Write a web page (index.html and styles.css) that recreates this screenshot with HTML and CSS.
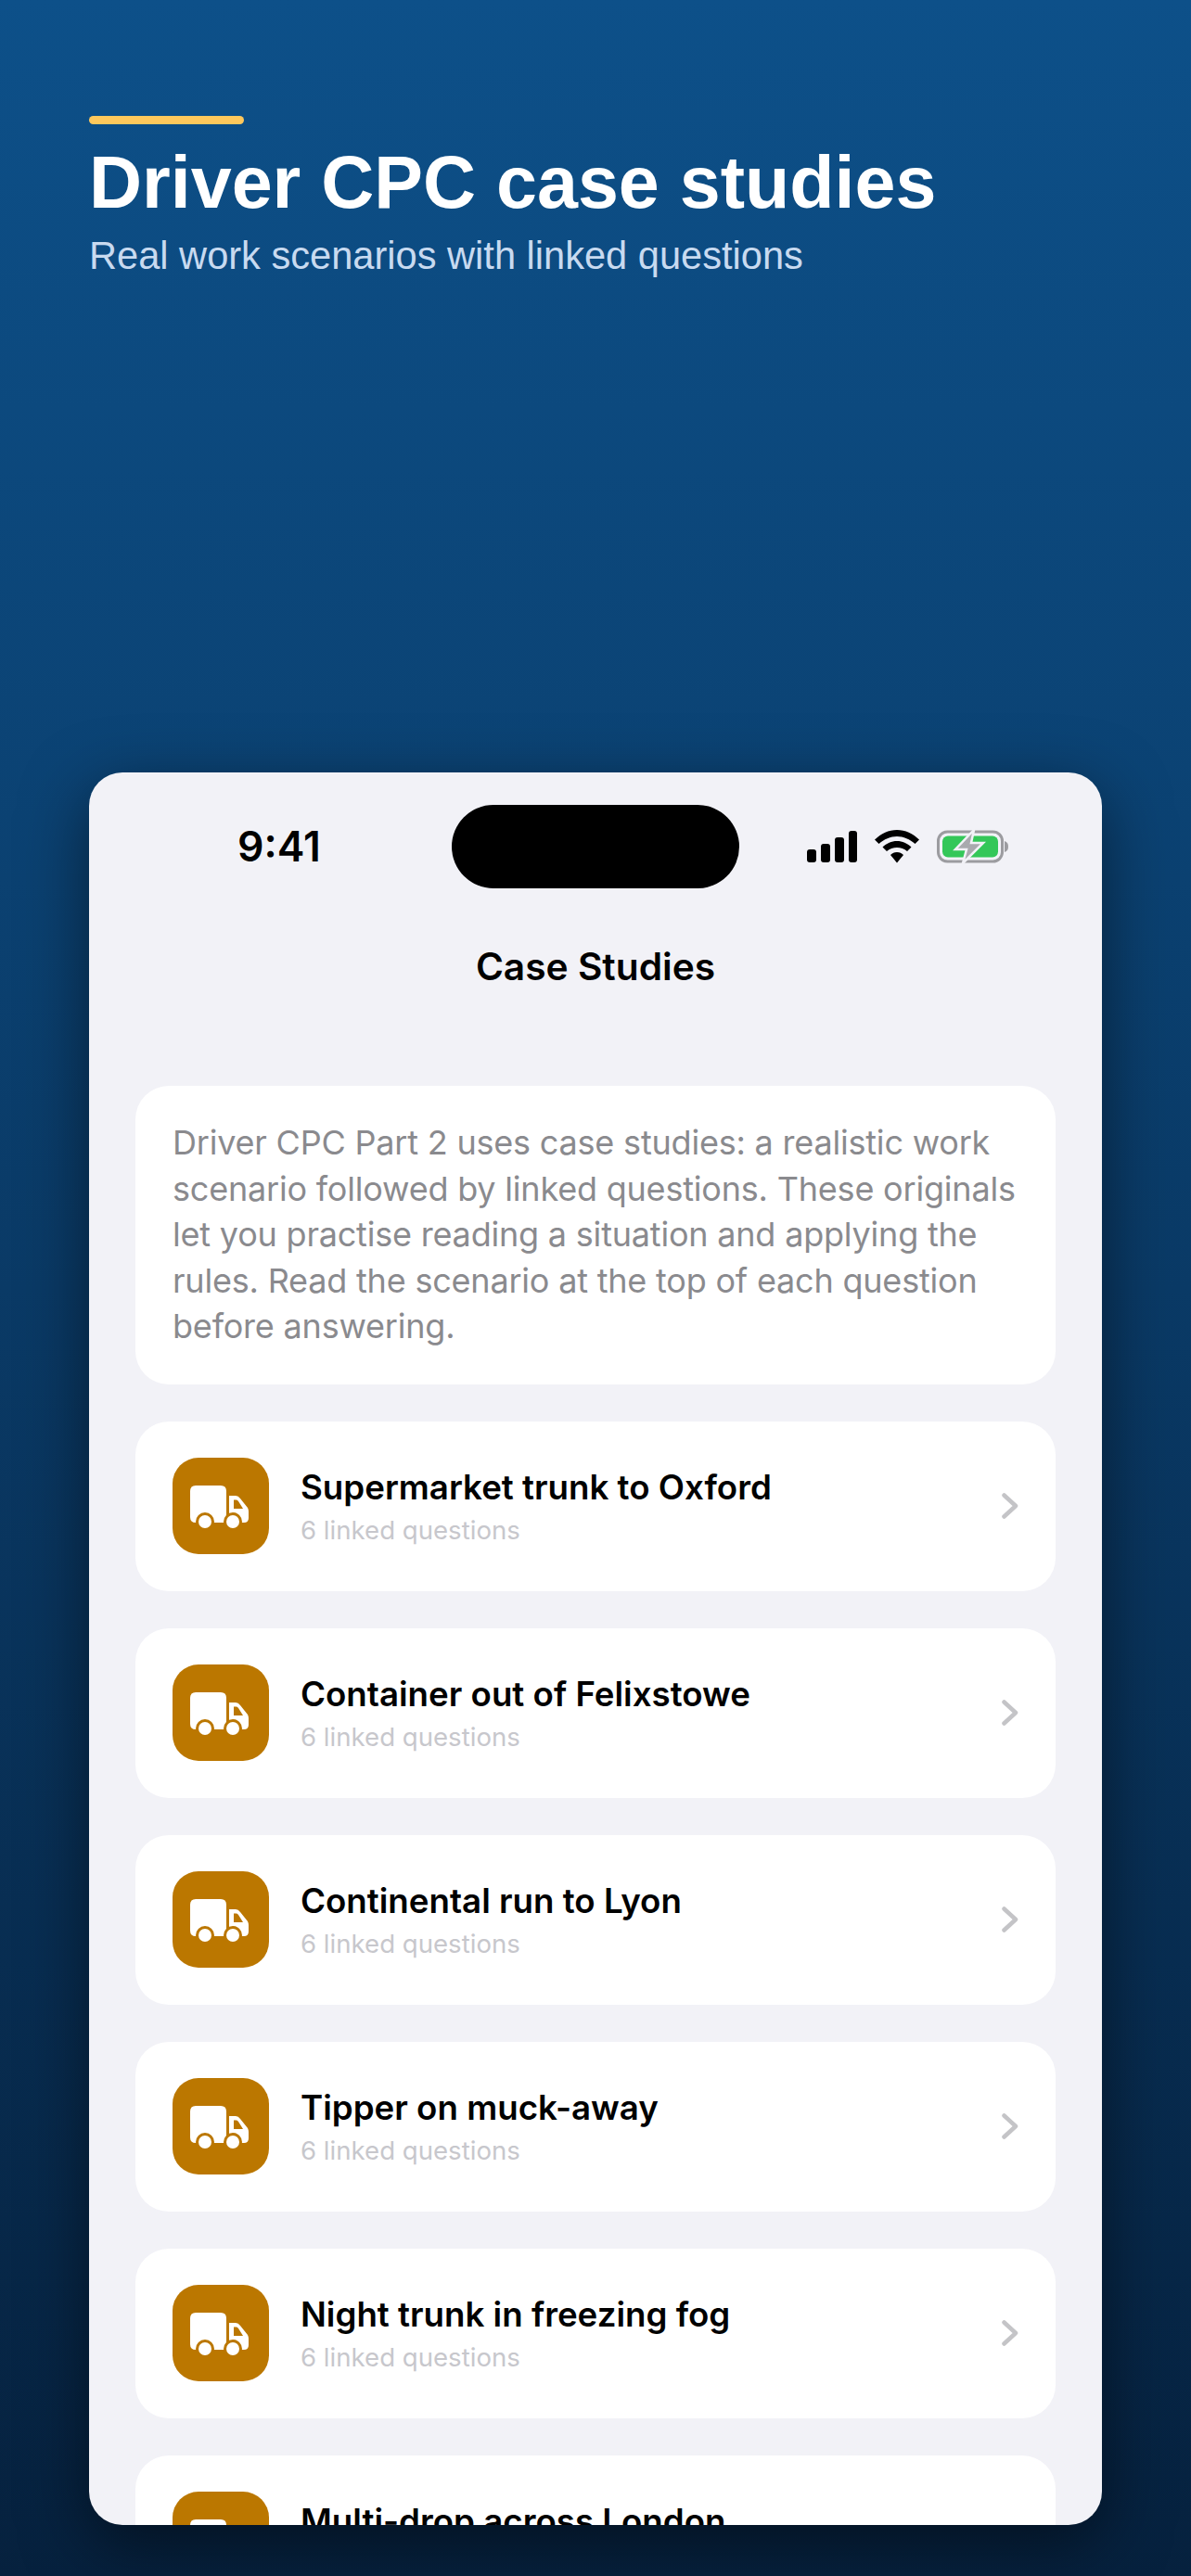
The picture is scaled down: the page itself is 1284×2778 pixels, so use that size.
FILE: index.html
```html
<!DOCTYPE html>
<html>
<head>
<meta charset="UTF-8">
<title>Driver CPC case studies</title>
<link rel="stylesheet" href="styles.css">
</head>
<body>
<div class="hero">
	<div class="accent"></div>
	<h1>Driver CPC case studies</h1>
	<p>Real work scenarios with linked questions</p>
</div>
<div class="phone">
	<div class="status">
		<span class="time">9:41</span>
		<div class="island"></div>
		<div class="status-icons">
			<svg width="54" height="34" viewBox="0 0 54 34"><rect x="0" y="20" width="10" height="14" rx="3"/><rect x="15" y="14" width="10" height="20" rx="3"/><rect x="30" y="7" width="10" height="27" rx="3"/><rect x="45" y="0" width="9" height="34" rx="3"/></svg>
			<svg width="48" height="36" viewBox="0 0 48 36"><path d="M24 0C15 0 7 4 0 10.500L4.500 15C10 10 17 7 24 7S38 10 43.500 15L48 10.500C41 4 33 0 24 0Z"/><path d="M24 12C18 12 13 14.500 8.500 18.500L13 23C16 20.500 20 19 24 19S32 20.500 35 23L39.500 18.500C35 14.500 30 12 24 12Z"/><path d="M24 24C21 24 19 25 17 27L24 35.500L31 27C29 25 27 24 24 24Z"/></svg>
			<svg width="78" height="36" viewBox="0 0 78 36"><rect x="1.500" y="2" width="69" height="32" rx="10" fill="none" stroke="#9c9ca0" stroke-width="3"/><rect x="6" y="6.500" width="60" height="23" rx="6" fill="#34c759"/><path d="M73 12C76 13 77 15 77 18S76 23 73 24Z" fill="#9c9ca0"/><path d="M40 0L20 21H32L28 36L50 14H37Z" fill="#a9a9ae" stroke="#f2f2f7" stroke-width="2.500"/></svg>
		</div>
	</div>
	<div class="nav-title">Case Studies</div>
	<div class="content">
		<div class="info">Driver CPC Part 2 uses case studies: a realistic work scenario followed by linked questions. These originals let you practise reading a situation and applying the rules. Read the scenario at the top of each question before answering.</div>

		<div class="row">
			<div class="row-icon"><svg width="104" height="104" viewBox="0 0 104 104"><use href="#truck"/></svg></div>
			<div class="row-text"><h3>Supermarket trunk to Oxford</h3><span>6 linked questions</span></div>
			<svg class="chevron" width="18" height="28" viewBox="0 0 18 28"><path d="M2.500 2.500L15 14L2.500 25.500" fill="none" stroke="#c4c4c7" stroke-width="4.500" stroke-linecap="round" stroke-linejoin="round"/></svg>
		</div>
		<div class="row">
			<div class="row-icon"><svg width="104" height="104" viewBox="0 0 104 104"><use href="#truck"/></svg></div>
			<div class="row-text"><h3>Container out of Felixstowe</h3><span>6 linked questions</span></div>
			<svg class="chevron" width="18" height="28" viewBox="0 0 18 28"><path d="M2.500 2.500L15 14L2.500 25.500" fill="none" stroke="#c4c4c7" stroke-width="4.500" stroke-linecap="round" stroke-linejoin="round"/></svg>
		</div>
		<div class="row">
			<div class="row-icon"><svg width="104" height="104" viewBox="0 0 104 104"><use href="#truck"/></svg></div>
			<div class="row-text"><h3>Continental run to Lyon</h3><span>6 linked questions</span></div>
			<svg class="chevron" width="18" height="28" viewBox="0 0 18 28"><path d="M2.500 2.500L15 14L2.500 25.500" fill="none" stroke="#c4c4c7" stroke-width="4.500" stroke-linecap="round" stroke-linejoin="round"/></svg>
		</div>
		<div class="row">
			<div class="row-icon"><svg width="104" height="104" viewBox="0 0 104 104"><use href="#truck"/></svg></div>
			<div class="row-text"><h3>Tipper on muck-away</h3><span>6 linked questions</span></div>
			<svg class="chevron" width="18" height="28" viewBox="0 0 18 28"><path d="M2.500 2.500L15 14L2.500 25.500" fill="none" stroke="#c4c4c7" stroke-width="4.500" stroke-linecap="round" stroke-linejoin="round"/></svg>
		</div>
		<div class="row">
			<div class="row-icon"><svg width="104" height="104" viewBox="0 0 104 104"><use href="#truck"/></svg></div>
			<div class="row-text"><h3>Night trunk in freezing fog</h3><span>6 linked questions</span></div>
			<svg class="chevron" width="18" height="28" viewBox="0 0 18 28"><path d="M2.500 2.500L15 14L2.500 25.500" fill="none" stroke="#c4c4c7" stroke-width="4.500" stroke-linecap="round" stroke-linejoin="round"/></svg>
		</div>
		<div class="row">
			<div class="row-icon"><svg width="104" height="104" viewBox="0 0 104 104"><use href="#truck"/></svg></div>
			<div class="row-text"><h3>Multi-drop across London</h3><span>6 linked questions</span></div>
			<svg class="chevron" width="18" height="28" viewBox="0 0 18 28"><path d="M2.500 2.500L15 14L2.500 25.500" fill="none" stroke="#c4c4c7" stroke-width="4.500" stroke-linecap="round" stroke-linejoin="round"/></svg>
		</div>
	</div>
</div>

<svg class="defs" width="0" height="0">
	<defs>
		<g id="truck">
			<path d="M25 30H52Q58 30 58 36V70H25Q19 70 19 64V36Q19 30 25 30Z" fill="#fff"/>
			<path d="M61 41H68Q71 41 73 44L81 54Q82 56 82 58V65Q82 70 77 70H61Z" fill="#fff"/>
			<path d="M66 45.500H69Q70 45.500 71 47L76 55H66Z" fill="#bb7700"/>
			<circle cx="35" cy="69" r="10" fill="#bb7700"/>
			<circle cx="65" cy="69" r="10" fill="#bb7700"/>
			<circle cx="35" cy="69" r="7" fill="#fff"/>
			<circle cx="65" cy="69" r="7" fill="#fff"/>
		</g>
	</defs>
</svg>
</body>
</html>
```

FILE: styles.css
```css
*{
	box-sizing : border-box;
}

html, body{
	margin : 0;
	height : 2778px;
}

body{
	overflow : hidden;
	padding : 125px 96px 0;
	background : linear-gradient(180deg, #0d5089 0%, #0a3a66 50%, #06213e 100%);
	font-family : "Inter", "Liberation Sans", sans-serif;
}

.hero{
	height : 708px;
	font-family : "Liberation Sans", Arial, sans-serif;
}

.accent{
	width : 167px;
	height : 9px;
	border-radius : 5px;
	background-color : #ffc85c;
}

.hero h1{
	margin : 17px 0 0;
	font-size : 79px;
	line-height : 92px;
	font-weight : bold;
	color : #fff;
}

.hero p{
	margin : 9px 0 0;
	font-size : 41.600px;
	line-height : 48px;
	color : #c8daf0;
}

.phone{
	width : 1092px;
	height : 1890px;
	overflow : hidden;
	border-radius : 36px;
	background-color : #f2f2f7;
	box-shadow : 0 20px 70px rgba(0,0,0,0.5);
}

.status{
	display : grid;
	grid-template-columns : 1fr auto 1fr;
	align-items : center;
	height : 90px;
	margin-top : 35px;
	padding : 0 100px;
}

.time{
	margin-left : 60px;
	font-size : 44.500px;
	font-weight : 600;
	color : #000;
}

.island{
	width : 310px;
	height : 90px;
	border-radius : 45px;
	background-color : #000;
}

.status-icons{
	display : flex;
	align-items : center;
	justify-content : flex-end;
	gap : 19px;
}

.nav-title{
	margin-top : 57px;
	text-align : center;
	font-size : 40.700px;
	line-height : 56px;
	font-weight : 560;
	color : #000;
}

.content{
	display : flex;
	flex-direction : column;
	gap : 40px;
	padding : 100px 50px 0;
}

.info{
	padding : 37px 40px;
	border-radius : 36px;
	background-color : #fff;
	color : #8a8a8e;
	font-size : 36px;
	letter-spacing : -0.200px;
	line-height : 49.600px;
}

.row{
	display : flex;
	flex-shrink : 0;
	align-items : center;
	height : 183px;
	padding : 0 40px;
	border-radius : 36px;
	background-color : #fff;
}

.row-icon{
	flex-shrink : 0;
	width : 104px;
	height : 104px;
	border-radius : 28px;
	background-color : #bb7700;
}

.row-icon svg{
	display : block;
}

.row-text{
	flex : 1;
	margin-left : 34px;
}

.row-text h3{
	margin : 0 0 6px;
	font-size : 36.700px;
	line-height : 46px;
	font-weight : 560;
	color : #000;
}

.row-text span{
	display : block;
	font-size : 27.600px;
	line-height : 34px;
	color : #c7c7cc;
}

.defs{
	position : absolute;
}
```
